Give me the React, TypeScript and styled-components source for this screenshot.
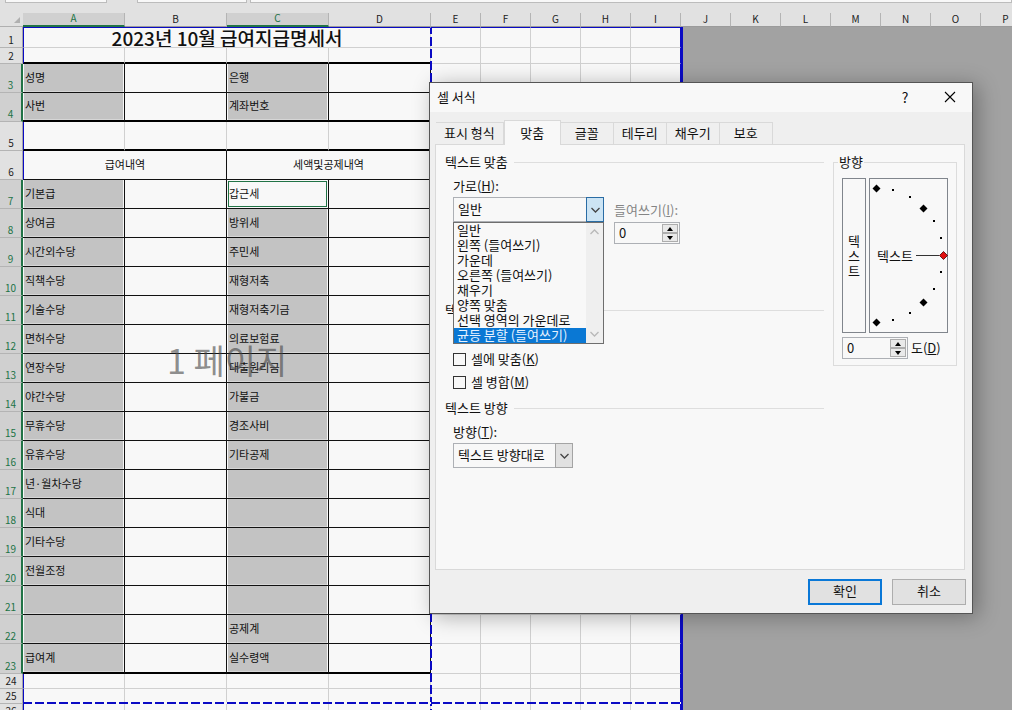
import React from 'react';
import styled, { createGlobalStyle, css } from 'styled-components';

const paper = '#f8f8f8';
const green = '#217346';
const blue = '#0a0ac4';
const gridline = '#d0d0d0';
const ink = '#111';

const GlobalStyle = createGlobalStyle`
  * { box-sizing: border-box; }
  body {
    margin: 0;
    overflow: hidden;
    background: #a2a2a2;
    color: ${ink};
    font-family: "Noto Sans CJK KR", sans-serif;
    font-size: 13px;
    line-height: 16px;
  }
  button, input, select { font: inherit; color: inherit; margin: 0; padding: 0; border-radius: 0; }
`;

const Workbook = styled.main`
  position: relative;
  height: 100vh;
  overflow: hidden;
`;

const FormulaBar = styled.div`
  display: flex;
  height: 13px;
  padding-left: 5px;
  background: #e1e1e1;
`;

const BarSlot = styled.div<{ $width?: number; $gap?: number }>`
  ${p => (p.$width ? `width: ${p.$width}px;` : 'flex: 1;')}
  height: 3px;
  margin-right: ${p => p.$gap ?? 0}px;
  background: ${paper};
  border: 1px solid #bcbcbc;
  border-top: 0;
`;

/* ---------- Sheet ---------- */

const Sheet = styled.table`
  width: 1031px;
  table-layout: fixed;
  border-collapse: separate;
  border-spacing: 0;
  font-size: 11px;
  line-height: 13px;
`;

const Row = styled.tr<{ $height: number }>`
  height: ${p => p.$height}px;
`;

const Corner = styled.td`
  padding: 0 3px 3px 0;
  background: #e1e1e1;
  border-bottom: 1px solid #b0b0b0;
  text-align: right;
  vertical-align: bottom;
  line-height: 0;
`;

const ColumnHead = styled.th<{ $selected?: boolean }>`
  padding: 0 0 2px;
  font: 400 10px/10px "Noto Sans CJK KR", sans-serif;
  color: ${p => (p.$selected ? green : '#222')};
  background: ${p => (p.$selected ? '#d0d0d0' : '#e1e1e1')};
  border-right: 1px solid #b4b4b4;
  border-bottom: ${p => (p.$selected ? `2px solid ${green}` : '1px solid #9b9b9b')};
`;

const RowHead = styled.th<{ $selected?: boolean }>`
  padding: 0 0 1px;
  font: 400 10px/12px "Noto Sans CJK KR", sans-serif;
  vertical-align: bottom;
  color: ${p => (p.$selected ? green : '#222')};
  background: ${p => (p.$selected ? '#d0d0d0' : '#e1e1e1')};
  border-right: ${p => (p.$selected ? `2px solid ${green}` : '1px solid #a6a6a6')};
  border-bottom: 1px solid #b4b4b4;
`;

type Edge = 'grid' | 'thin' | 'thick' | 'none' | 'print';
const edges: Record<Edge, string> = {
  grid: `1px solid ${gridline}`,
  thin: `1px solid ${ink}`,
  thick: '2px solid #000',
  none: '0',
  print: `1px solid ${blue}`,
};

const Cell = styled.td<{
  $right?: Edge;
  $bottom?: Edge;
  $left?: Edge;
  $top?: Edge;
  $selected?: boolean;
  $active?: boolean;
  $center?: boolean;
}>`
  padding: 0 2px 2px;
  overflow: hidden;
  white-space: nowrap;
  text-align: ${p => (p.$center ? 'center' : 'left')};
  background: ${p => (p.$selected ? '#c3c3c3' : paper)};
  border-right: ${p => edges[p.$right ?? 'grid']};
  border-bottom: ${p => edges[p.$bottom ?? 'grid']};
  border-left: ${p => edges[p.$left ?? 'none']};
  border-top: ${p => edges[p.$top ?? 'none']};
  ${p => p.$selected && css`box-shadow: inset 1px 0 ${paper}, inset -1px 0 ${paper}, inset 0 -1px #d6d6d6;`}
  ${p => p.$active && css`
    box-shadow: inset 0 0 0 1px ${paper}, inset 0 0 0 2px ${green};
  `}
`;

const TitleCell = styled(Cell)`
  padding: 0;
  font-size: 19px;
  line-height: 19px;
  font-weight: 500;
`;

const Outside = styled.td`
  padding: 0;
  background: #a2a2a2;
  border-left: 2px solid ${blue};
`;

const PageBreak = styled.div<{ $vertical?: boolean }>`
  position: absolute;
  ${p =>
    p.$vertical
      ? css`
          left: 430px; top: 28px; bottom: 0; width: 2px;
          background: repeating-linear-gradient(180deg, ${blue} 0 6px, transparent 6px 9px, ${blue} 9px 12px);
        `
      : css`
          left: 23px; top: 702px; width: 658px; height: 2px;
          background: repeating-linear-gradient(90deg, ${blue} 0 9px, ${paper} 9px 12px);
        `}
`;

const PageMark = styled.div`
  position: absolute;
  left: 167px;
  top: 340px;
  font-size: 34px;
  line-height: 40px;
  font-weight: 400;
  color: rgba(70, 70, 70, 0.6);
`;

const left: Record<number, string> = {
  3: '성명', 4: '사번', 7: '기본급', 8: '상여금', 9: '시간외수당', 10: '직책수당', 11: '기술수당',
  12: '면허수당', 13: '연장수당', 14: '야간수당', 15: '무휴수당', 16: '유휴수당', 17: '년·월차수당',
  18: '식대', 19: '기타수당', 20: '전월조정', 23: '급여계',
};
const right: Record<number, string> = {
  3: '은행', 4: '계좌번호', 7: '갑근세', 8: '방위세', 9: '주민세', 10: '재형저축', 11: '재형저축기금',
  12: '의료보험료', 13: '대출원리금', 14: '가불금', 15: '경조사비', 16: '기타공제', 22: '공제계', 23: '실수령액',
};

const heights: Record<number, number> = { 1: 21, 2: 16, 23: 30, 24: 15, 25: 15, 26: 15 };
const rows = Array.from({ length: 26 }, (_, i) => i + 1);
const letters = 'ABCDEFGHIJKLMNOP'.split('');
const isForm = (n: number) => n === 3 || n === 4 || (n >= 7 && n <= 23);

function bottomEdge(n: number): Edge {
  if (n === 2 || n === 4 || n === 5 || n === 23) return 'thick';
  return n === 3 || (n >= 6 && n < 23) ? 'thin' : 'grid';
}

function MainCells({ n }: { n: number }) {
  const bottom = bottomEdge(n);
  if (n === 1)
    return <TitleCell colSpan={4} $center $left="print" $top="print">2023년 10월 급여지급명세서</TitleCell>;
  if (n === 6)
    return (
      <>
        <Cell colSpan={2} $center $left="print" $right="thin" $bottom={bottom}>급여내역</Cell>
        <Cell colSpan={2} $center $right="thin" $bottom={bottom}>세액및공제내역</Cell>
      </>
    );
  if (isForm(n))
    return (
      <>
        <Cell $selected $right="thin" $bottom={bottom}>{left[n]}</Cell>
        <Cell $right="thin" $bottom={bottom} />
        <Cell $selected={n !== 7} $active={n === 7} $right="thin" $bottom={bottom}>{right[n]}</Cell>
        <Cell $right="thin" $bottom={bottom} />
      </>
    );
  return (
    <>
      <Cell $left="print" $bottom={bottom} />
      <Cell $bottom={bottom} />
      <Cell $bottom={bottom} />
      <Cell $bottom={bottom} />
    </>
  );
}

function SheetTable() {
  return (
    <Sheet>
      <colgroup>
        <col style={{ width: 23 }} />
        {letters.map((l, i) => <col key={l} style={{ width: i < 4 ? 102 : 50 }} />)}
      </colgroup>
      <thead>
        <Row $height={14}>
          <Corner>
            <svg width="6" height="6" viewBox="0 0 6 6"><path d="M6 0V6H0Z" fill="#b0b0b0" /></svg>
          </Corner>
          {letters.map(l => <ColumnHead key={l} scope="col" $selected={l === 'A' || l === 'C'}>{l}</ColumnHead>)}
        </Row>
      </thead>
      <tbody>
        {rows.map(n => (
          <Row key={n} $height={heights[n] ?? 29}>
            <RowHead scope="row" $selected={isForm(n)}>{n}</RowHead>
            <MainCells n={n} />
            {['E', 'F', 'G', 'H', 'I'].map(l => (
              <Cell key={l} $right={l === 'I' ? 'print' : 'grid'} $top={n === 1 ? 'print' : 'none'} />
            ))}
            {n === 1 && <Outside colSpan={7} rowSpan={26} />}
          </Row>
        ))}
      </tbody>
    </Sheet>
  );
}

/* ---------- Dialog ---------- */

const Dialog = styled.section`
  position: absolute;
  left: 429px;
  top: 82px;
  width: 544px;
  background: #efefef;
  border: 1px solid #555;
  box-shadow: 5px 3px 20px rgba(0, 0, 0, 0.3);
`;

const TitleBar = styled.header`
  display: flex;
  align-items: center;
  height: 29px;
  padding: 0 7px 2px;
  background: ${paper};
`;

const DialogTitle = styled.h1`
  flex: 1;
  margin: 0;
  font-size: 13px;
  font-weight: 400;
`;

const TitleButton = styled.button`
  display: grid;
  place-items: center;
  width: 30px;
  height: 27px;
  margin-left: 15px;
  border: 0;
  background: none;
  font-size: 14px;
`;

const Tabs = styled.div`
  display: flex;
  align-items: flex-end;
  margin: 8px 6px 0;
`;

const Tab = styled.button<{ $on?: boolean }>`
  position: relative;
  min-width: ${p => (p.$on ? 57 : 53)}px;
  height: ${p => (p.$on ? 25 : 22)}px;
  margin-bottom: ${p => (p.$on ? -1 : 0)}px;
  padding: 0 8px 1px;
  background: ${p => (p.$on ? paper : '#efefef')};
  border: 1px solid #d9d9d9;
  border-bottom: 0;
  border-left-width: ${p => (p.$on ? 1 : 0)}px;
`;

const Panel = styled.div`
  display: flex;
  align-items: flex-start;
  gap: 9px;
  min-height: 426px;
  margin: 0 7px 0 5px;
  padding: 9px 7px 0 9px;
  background: ${paper};
  border: 1px solid #d9d9d9;
`;

const Settings = styled.div`
  flex: 1;
`;

const SectionTitle = styled.h2<{ $before?: number }>`
  display: flex;
  align-items: center;
  gap: 6px;
  margin: ${p => p.$before ?? 0}px 0 0;
  font-size: 13px;
  font-weight: 400;
  &::after {
    content: '';
    flex: 1;
    height: 1px;
    background: #dedede;
  }
`;

const Fields = styled.div<{ $before?: number }>`
  display: flex;
  gap: 10px;
  margin: ${p => p.$before ?? 8}px 0 0 8px;
`;

const Field = styled.div<{ $width: number; $drop?: number; $gap?: number }>`
  display: flex;
  flex-direction: column;
  gap: ${p => p.$gap ?? 3}px;
  width: ${p => p.$width}px;
  margin-top: ${p => p.$drop ?? 0}px;
`;

const Label = styled.label<{ $dim?: boolean }>`
  white-space: nowrap;
  color: ${p => (p.$dim ? '#858585' : ink)};
`;

const SelectBox = styled.div`
  position: relative;
  height: 25px;
`;

const Select = styled.select`
  appearance: none;
  width: 100%;
  height: 100%;
  padding: 0 20px 1px 4px;
  background: ${paper};
  border: 1px solid #adb0b5;
`;

const Arrow = styled.span<{ $open?: boolean }>`
  position: absolute;
  top: 0;
  right: 0;
  bottom: 0;
  display: grid;
  place-items: center;
  width: 18px;
  pointer-events: none;
  background: ${p => (p.$open ? '#cce4f4' : '#e1e1e1')};
  border: 1px solid ${p => (p.$open ? '#2a6ca4' : '#a4a4a4')};
`;

const Popup = styled.div`
  position: absolute;
  top: 100%;
  left: 0;
  right: 0;
  display: flex;
  background: ${paper};
  border: 1px solid #6e6e6e;
`;

const Options = styled.ul`
  flex: 1;
  margin: 0;
  padding: 0;
  list-style: none;
`;

const Option = styled.li<{ $on?: boolean }>`
  height: 15px;
  padding-left: 3px;
  line-height: 13px;
  white-space: nowrap;
  color: ${p => (p.$on ? '#e6f2ff' : ink)};
  background: ${p => (p.$on ? '#0a78d4' : 'transparent')};
`;

const ScrollTrack = styled.div`
  display: flex;
  flex-direction: column;
  align-items: center;
  justify-content: space-between;
  width: 17px;
  padding: 6px 0;
  background: #efefef;
`;

const Spinner = styled.div`
  display: flex;
  width: 66px;
  height: 22px;
  padding: 1px;
  background: ${paper};
  border: 1px solid #adb0b5;
`;

const SpinInput = styled.input`
  flex: 1;
  min-width: 0;
  padding-left: 3px;
  border: 0;
  background: none;
`;

const SpinButtons = styled.div`
  display: grid;
  grid-template-rows: 1fr 1fr;
  width: 16px;
`;

const SpinButton = styled.button`
  display: grid;
  place-items: center;
  min-height: 0;
  background: #e9e9e9;
  border: 1px solid #adadad;
`;

const Checks = styled.div`
  display: flex;
  flex-direction: column;
  gap: 7px;
  margin: 33px 0 0 8px;
`;

const CheckLabel = styled.label`
  display: flex;
  align-items: center;
  gap: 5px;
`;

const Check = styled.input`
  appearance: none;
  width: 13px;
  height: 13px;
  background: ${paper};
  border: 1px solid #333;
`;

const Orientation = styled.fieldset`
  position: relative;
  width: 124px;
  min-width: 0;
  margin: 8px 0 0;
  padding: 15px 8px 6px;
  border: 1px solid #dcdcdc;
`;

const Legend = styled.span`
  position: absolute;
  top: -9px;
  left: 4px;
  padding: 0 1px;
  background: ${paper};
`;

const Dials = styled.div`
  display: flex;
  gap: 3px;
  height: 155px;
`;

const VerticalButton = styled.button`
  width: 24px;
  padding: 0 5px;
  line-height: 15px;
  background: ${paper};
  border: 1px solid #80858c;
`;

const Dial = styled.div`
  position: relative;
  flex: 1;
  display: flex;
  align-items: center;
  padding-left: 7px;
  border: 1px solid #80858c;
  svg { position: absolute; inset: -1px; }
`;

const Degrees = styled.div`
  display: flex;
  align-items: center;
  gap: 3px;
  margin-top: 4px;
`;

const Footer = styled.footer`
  display: flex;
  justify-content: flex-end;
  gap: 10px;
  padding: 9px 6px 8px;
`;

const Action = styled.button<{ $primary?: boolean }>`
  width: 74px;
  height: 26px;
  padding-bottom: 2px;
  background: #e1e1e1;
  border: ${p => (p.$primary ? '2px solid #0a78d7' : '1px solid #adadad')};
`;

const Chevron = ({ up, color = '#444' }: { up?: boolean; color?: string }) => (
  <svg width="9" height="6" viewBox="0 0 9 6">
    <path d={up ? 'M.5 5 4.5 1 8.5 5' : 'M.5 1 4.5 5 8.5 1'} fill="none" stroke={color} strokeWidth="1.3" />
  </svg>
);

const Triangle = ({ up }: { up?: boolean }) => (
  <svg width="6" height="4" viewBox="0 0 6 4">
    <path d={up ? 'M0 4 3 0 6 4Z' : 'M0 0 3 4 6 0Z'} fill="#000" />
  </svg>
);

const NumberSpinner = ({ id }: { id: string }) => (
  <Spinner>
    <SpinInput id={id} type="text" inputMode="numeric" defaultValue="0" />
    <SpinButtons>
      <SpinButton type="button" aria-label="증가"><Triangle up /></SpinButton>
      <SpinButton type="button" aria-label="감소"><Triangle /></SpinButton>
    </SpinButtons>
  </Spinner>
);

const options = [
  '일반', '왼쪽 (들여쓰기)', '가운데', '오른쪽 (들여쓰기)', '채우기', '양쪽 맞춤',
  '선택 영역의 가운데로', '균등 분할 (들여쓰기)',
];
const tabs = ['표시 형식', '맞춤', '글꼴', '테두리', '채우기', '보호'];
const bigDots = [[7.5, 10.5], [54.5, 30.5], [54.5, 124.5], [7.5, 144.5]];
const smallDots = [[24, 12], [41, 19], [65, 43], [72, 60], [72, 94], [65, 111], [41, 135], [24, 142]];

function CellFormatDialog() {
  return (
    <Dialog role="dialog" aria-labelledby="dialog-title">
      <TitleBar>
        <DialogTitle id="dialog-title">셀 서식</DialogTitle>
        <TitleButton type="button">?</TitleButton>
        <TitleButton type="button" aria-label="닫기">
          <svg width="12" height="12" viewBox="0 0 12 12"><path d="M1 1 11 11M11 1 1 11" stroke="#000" strokeWidth="1.1" /></svg>
        </TitleButton>
      </TitleBar>
      <Tabs role="tablist">
        {tabs.map(t => <Tab key={t} type="button" role="tab" aria-selected={t === '맞춤'} $on={t === '맞춤'}>{t}</Tab>)}
      </Tabs>
      <Panel role="tabpanel">
        <Settings>
          <SectionTitle>텍스트 맞춤</SectionTitle>
          <Fields>
            <Field $width={151}>
              <Label htmlFor="horizontal">가로(<u>H</u>):</Label>
              <SelectBox>
                <Select id="horizontal" defaultValue="일반">
                  {options.map(o => <option key={o}>{o}</option>)}
                </Select>
                <Arrow $open><Chevron /></Arrow>
                <Popup>
                  <Options role="listbox" aria-label="가로">
                    {options.map((o, i) => (
                      <Option key={o} role="option" aria-selected={i === 7} $on={i === 7}>{o}</Option>
                    ))}
                  </Options>
                  <ScrollTrack><Chevron up color="#b8b8b8" /><Chevron color="#b8b8b8" /></ScrollTrack>
                </Popup>
              </SelectBox>
            </Field>
            <Field $width={66} $drop={24} $gap={4}>
              <Label htmlFor="indent" $dim>들여쓰기(<u>I</u>):</Label>
              <NumberSpinner id="indent" />
            </Field>
          </Fields>
          <SectionTitle $before={58}>텍스트 조정</SectionTitle>
          <Checks>
            <CheckLabel><Check type="checkbox" /><span>셀에 맞춤(<u>K</u>)</span></CheckLabel>
            <CheckLabel><Check type="checkbox" /><span>셀 병합(<u>M</u>)</span></CheckLabel>
          </Checks>
          <SectionTitle $before={10}>텍스트 방향</SectionTitle>
          <Fields>
            <Field $width={120}>
              <Label htmlFor="direction">방향(<u>T</u>):</Label>
              <SelectBox>
                <Select id="direction"><option>텍스트 방향대로</option></Select>
                <Arrow><Chevron /></Arrow>
              </SelectBox>
            </Field>
          </Fields>
        </Settings>
        <Orientation aria-labelledby="orientation-title">
          <Legend id="orientation-title">방향</Legend>
          <Dials>
            <VerticalButton type="button">텍스트</VerticalButton>
            <Dial>
              텍스트
              <svg width="80" height="155" viewBox="0 0 80 155">
                {bigDots.map(([x, y]) => (
                  <path key={`${x}-${y}`} d={`M${x - 4} ${y}l4-4 4 4-4 4z`} fill="#000" />
                ))}
                {smallDots.map(([x, y]) => (
                  <rect key={`${x}-${y}`} x={x - 1} y={y - 1} width="2" height="2" fill="#000" />
                ))}
                <path d="M47 77.5H70" stroke="#333" />
                <path d="M70.5 77.5l4-4 4 4-4 4z" fill="#e01010" stroke="#400" strokeWidth=".8" />
              </svg>
            </Dial>
          </Dials>
          <Degrees>
            <NumberSpinner id="degrees" />
            <Label htmlFor="degrees">도(<u>D</u>)</Label>
          </Degrees>
        </Orientation>
      </Panel>
      <Footer>
        <Action type="button" $primary>확인</Action>
        <Action type="button">취소</Action>
      </Footer>
    </Dialog>
  );
}

export default function App() {
  return (
    <Workbook>
      <GlobalStyle />
      <FormulaBar>
        <BarSlot $width={102} $gap={30} />
        <BarSlot $width={110} $gap={3} />
        <BarSlot />
      </FormulaBar>
      <SheetTable />
      <PageBreak $vertical />
      <PageBreak />
      <PageMark>1 페이지</PageMark>
      <CellFormatDialog />
    </Workbook>
  );
}
